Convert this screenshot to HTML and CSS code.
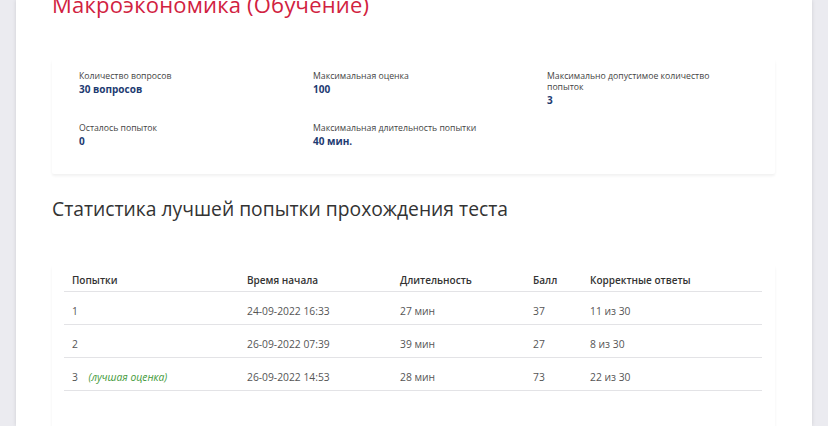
FILE: index.html
```html
<!DOCTYPE html>
<html lang="ru">
<head>
    <meta charset="UTF-8">
    <title>Макроэкономика (Обучение)</title>
    <link rel="stylesheet" href="styles.css">
</head>
<body>
    <div class="page">
        <h1 class="title">Макроэкономика (Обучение)</h1>

        <section class="card info">
            <div class="info-item">
                <p class="label">Количество вопросов</p>
                <p class="value">30 вопросов</p>
            </div>
            <div class="info-item">
                <p class="label">Максимальная оценка</p>
                <p class="value">100</p>
            </div>
            <div class="info-item">
                <p class="label">Максимально допустимое количество попыток</p>
                <p class="value">3</p>
            </div>
            <div class="info-item">
                <p class="label">Осталось попыток</p>
                <p class="value">0</p>
            </div>
            <div class="info-item">
                <p class="label">Максимальная длительность попытки</p>
                <p class="value">40 мин.</p>
            </div>
        </section>

        <h2 class="subtitle">Статистика лучшей попытки прохождения теста</h2>

        <section class="card stats">
            <table class="attempts">
                <thead>
                    <tr>
                        <th class="col-num">Попытки</th>
                        <th class="col-start">Время начала</th>
                        <th class="col-dur">Длительность</th>
                        <th class="col-score">Балл</th>
                        <th>Корректные ответы</th>
                    </tr>
                </thead>
                <tbody>
                    <tr>
                        <td>1</td>
                        <td>24-09-2022 16:33</td>
                        <td>27 мин</td>
                        <td>37</td>
                        <td>11 из 30</td>
                    </tr>
                    <tr>
                        <td>2</td>
                        <td>26-09-2022 07:39</td>
                        <td>39 мин</td>
                        <td>27</td>
                        <td>8 из 30</td>
                    </tr>
                    <tr>
                        <td>3 <span class="best">(лучшая оценка)</span></td>
                        <td>26-09-2022 14:53</td>
                        <td>28 мин</td>
                        <td>73</td>
                        <td>22 из 30</td>
                    </tr>
                </tbody>
            </table>
        </section>
    </div>
</body>
</html>
```

FILE: styles.css
```css
body {
    margin: 0;
    padding: 0;
    background-color: #ebebf0;
    font-family: "Open Sans", "Noto Sans", sans-serif;
    overflow: hidden;
}
.page {
    margin-left: 16px;
    width: 796px;
    height: 426px;
    background-color: #fff;
    box-shadow: 0 0 4px rgba(0,0,0,0.12);
    padding: 0 37px 0 36px;
    box-sizing: border-box;
    overflow: hidden;
}
.title {
    margin: -11px 0 0 0;
    font-size: 22px;
    line-height: 30px;
    font-weight: 400;
    color: #d1223f;
    letter-spacing: 0.2px;
}
.card {
    background-color: #fff;
    box-shadow: 0 2px 3px rgba(0,0,0,0.06);
    border-radius: 2px;
}
.info {
    margin-top: 40px;
    padding: 12px 27px 26px;
    display: grid;
    grid-template-columns: 234px 234px 175px;
    row-gap: 16px;
}
.info-item p {
    margin: 0;
}
.label {
    font-size: 8.7px;
    line-height: 11px;
    color: #444;
}
.value {
    font-size: 10px;
    line-height: 14px;
    font-weight: 700;
    color: #1e3b72;
}
.subtitle {
    margin: 22px 0 0 0;
    font-size: 19.3px;
    line-height: 26px;
    font-weight: 400;
    color: #333;
}
.stats {
    margin-top: 43px;
    padding: 0 13px 40px 12px;
    height: 200px;
}
.attempts {
    width: 100%;
    border-collapse: collapse;
    font-size: 10.3px;
    color: #555;
}
.attempts th {
    text-align: left;
    font-size: 10px;
    font-weight: 600;
    color: #333;
    padding: 4px 8px 0;
    height: 22px;
    border-bottom: 1px solid #e3e3e6;
}
.attempts td {
    padding: 5px 8px 0;
    height: 27px;
    border-bottom: 1px solid #e3e3e6;
}
.col-num { width: 159px; }
.col-start { width: 137px; }
.col-dur { width: 117px; }
.col-score { width: 41px; }
.best {
    margin-left: 8px;
    font-style: italic;
    color: #3f9a3a;
}
```
